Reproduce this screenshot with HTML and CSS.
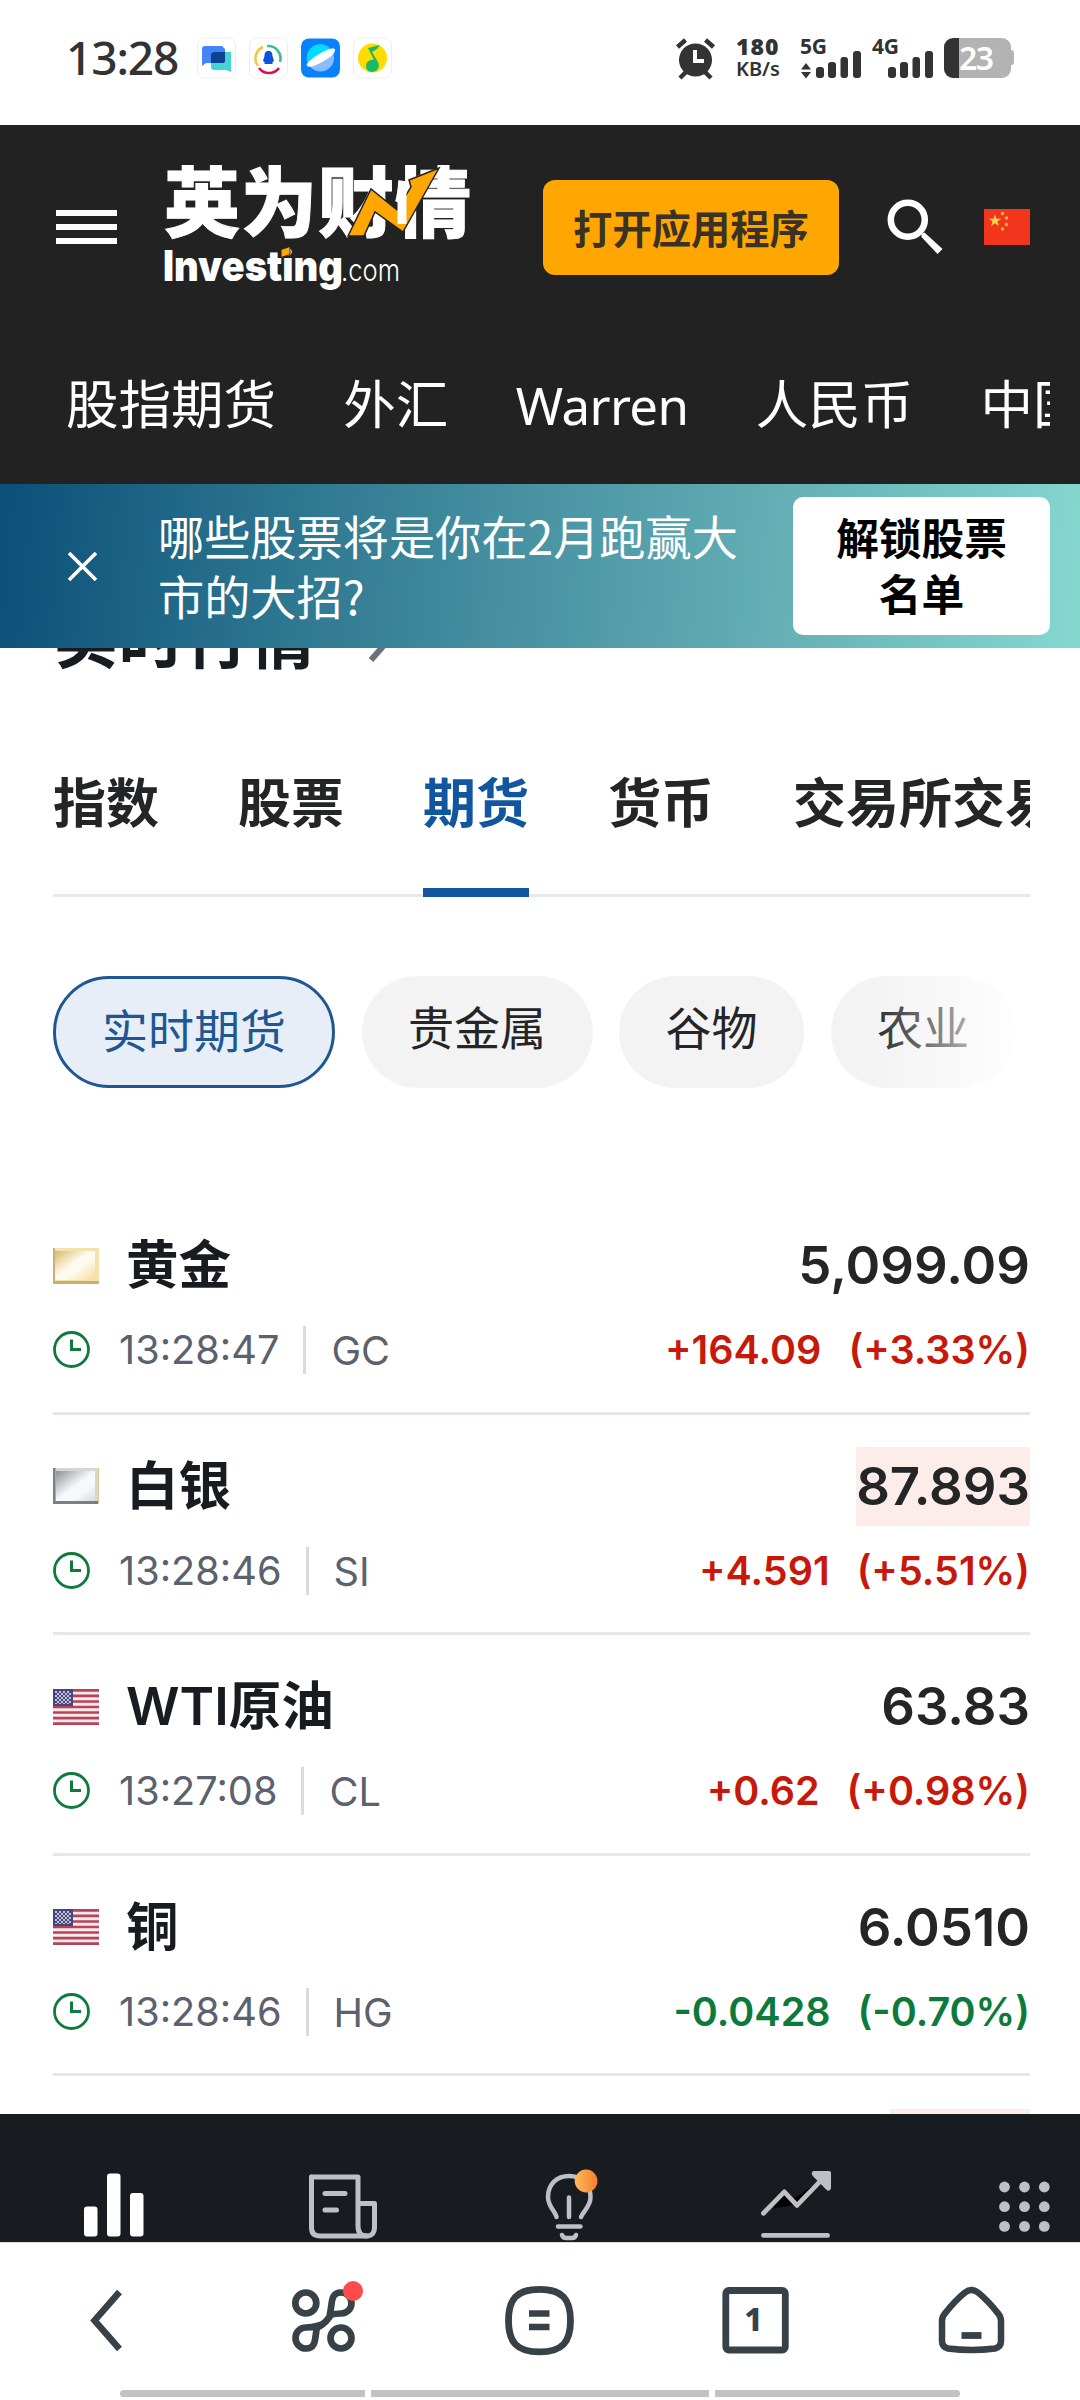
FILE: index.html
```html
<!DOCTYPE html>
<html lang="zh-CN">
<head>
<meta charset="utf-8">
<title>英为财情 Investing.com</title>
<link rel="stylesheet" href="styles.css">
</head>
<body>
<div class="phone">
  <div class="status">
    <span class="clock">13:28</span>
    <div class="apps">
      <svg class="app" viewBox="0 0 40 42"><rect x=".5" y="1" width="38" height="40" rx="7" fill="#fff" stroke="#eee"/><path d="M5 12q0-3 3-3h17l3 3v12q0 2-2 2H9l-4 3z" fill="#4285f4"/><path d="M14 18q0-3 3-3h17v20l-5-2H17q-3 0-3-3z" fill="#44d4d4"/><path d="M14 18q0-3 3-3h11v9q0 2-2 2H14z" fill="#0d4191"/></svg>
      <svg class="app" viewBox="0 0 40 42"><rect x=".5" y="1" width="38" height="40" rx="7" fill="#fff" stroke="#eee"/><g fill="none" stroke-width="2.6"><path d="M9 29a12.500 12.500 0 0 1 5-19" stroke="#f5c63c"/><path d="M18 9a12.500 12.500 0 0 1 13 16" stroke="#3bbfa0"/><path d="M30 31a12.500 12.500 0 0 1-20 0" stroke="#d90e56"/></g><path d="M19.500 14c3 0 4 2 4 5l1.500 5-1.500 1v2h-8v-2L14 24l1.500-5c0-3 1-5 4-5z" fill="#0a55d8"/></svg>
      <svg class="app" viewBox="0 0 40 42"><rect x="0" y="1.500" width="39" height="39" rx="8" fill="#0782fa"/><circle cx="19.500" cy="21" r="13.500" fill="#8abcff"/><path d="M6.500 25A13.500 13.500 0 0 1 31 14z" fill="#00dcff"/><path d="M6 29c-2-2 5-8 13-12.500S34 10 34 13s-4 7-12 11.500S8 31 6 29z" fill="#fff"/></svg>
      <svg class="app" viewBox="0 0 40 42"><rect x=".5" y="1" width="38" height="40" rx="7" fill="#fff" stroke="#eee"/><circle cx="19.500" cy="21" r="14.500" fill="#ffdc00"/><path d="M15 11l12-3-3 4-5 3 6 10c3 6-2 10-6 10s-6-3-6-6c0-4 4-7 8-6z" fill="#1bb86b"/></svg>
    </div>
    <div class="status-right">
      <svg class="alarm" viewBox="676 38 40 42"><circle cx="695.500" cy="60" r="16.500" fill="#333"/><path d="M677.500 47l8-7M713.500 47l-8-7M680 78l6-6M711 78l-6-6" stroke="#333" stroke-width="4.500"/><path d="M695 50v11h9" fill="none" stroke="#fff" stroke-width="4"/></svg>
      <div class="rate"><b>180</b><span>KB/s</span></div>
      <svg class="signal" viewBox="800 36 62 44"><text x="800" y="54" textLength="27">5G</text><path d="M801 69.500l5-6.500 5 6.500zM801 72h10l-5 6.500z"/><rect x="816" y="67" width="8" height="11" rx="3"/><rect x="828" y="62" width="8" height="16" rx="3"/><rect x="840.500" y="57" width="7.500" height="21" rx="3"/><rect x="853" y="51" width="8" height="27" rx="3"/></svg>
      <svg class="signal" viewBox="872 36 62 44"><text x="872" y="54" textLength="27">4G</text><rect x="888" y="67" width="8" height="11" rx="3"/><rect x="900" y="62" width="8" height="16" rx="3"/><rect x="912.500" y="57" width="7.500" height="21" rx="3"/><rect x="925" y="51" width="8" height="27" rx="3"/></svg>
      <div class="battery"><span>23</span></div>
    </div>
  </div>

  <header class="header">
    <div class="brand-row">
      <div class="burger"><i></i><i></i><i></i></div>
      <svg class="logo" viewBox="160 155 320 140">
        <text class="logo-cn" x="164" y="231" textLength="307">英为财情</text>
        <path d="M348 236l23-47 26 21 14-23-2-7 30-12-36 64-28-20-11 24z" fill="#ffa600" stroke="#222" stroke-width="1.500"/>
        <path d="M397.500 192l9-5v37h-9z" fill="#fff"/>
        <text class="logo-en" x="163" y="281" textLength="180" lengthAdjust="spacingAndGlyphs">Investing</text>
        <path d="M281 249.500l9-3v8l-9 3z" fill="#ffa600" stroke="#222" stroke-width="1"/>
        <text class="logo-com" x="341" y="281" textLength="59" lengthAdjust="spacingAndGlyphs">.com</text>
      </svg>
      <div class="open-app">打开应用程序</div>
      <svg class="search" viewBox="886 199 58 58"><circle cx="907.800" cy="220.800" r="17" fill="none" stroke="#fff" stroke-width="6.500"/><path d="M921.500 235l3-1.500 18 16.500-5 5-16-17z" fill="#fff"/></svg>
      <svg class="cn-flag" viewBox="0 0 46 36"><path fill="#f1361d" d="M0 0h46v36H0z"/><path fill="#ffd348" d="M11 5.500l1.500 4.300h4.600l-3.700 2.700 1.400 4.500-3.800-2.700L7.200 17l1.400-4.500-3.700-2.700h4.600z"/><g fill="#f7b53a"><circle cx="18.500" cy="4.500" r="1.700"/><circle cx="22.500" cy="9" r="1.700"/><circle cx="22.500" cy="15.500" r="1.700"/><circle cx="18.500" cy="20" r="1.700"/></g></svg>
    </div>
    <nav class="topnav"><span>股指期货</span><span>外汇</span><span class="latin">Warren</span><span>人民币</span><span>中国</span></nav>
  </header>

  <div class="banner">
    <svg class="close" viewBox="0 0 31 31"><path d="M2 2l27 27M29 2L2 29" stroke="#fff" stroke-width="3.600"/></svg>
    <p class="promo">哪些股票将是你在2月跑赢大<br>市的大招?</p>
    <div class="unlock">解锁股票<br>名单</div>
  </div>

  <main class="main">
    <div class="title-clip">
      <h2 class="title">实时行情</h2>
      <svg class="chev" viewBox="0 0 20 38"><path d="M2 2l15 17L2 36" fill="none" stroke="#6a707c" stroke-width="6"/></svg>
    </div>
    <div class="tabs"><span>指数</span><span>股票</span><span class="on">期货</span><span>货币</span><span>交易所交易基金</span></div>
    <div class="chips"><span class="chip on">实时期货</span><span class="chip">贵金属</span><span class="chip">谷物</span><span class="chip">农业</span></div>

    <svg class="defs" width="0" height="0">
      <defs>
        <linearGradient id="gold" x2="1" y2="1"><stop offset="0" stop-color="#d8b868"/><stop offset=".45" stop-color="#fffaf0"/><stop offset=".6" stop-color="#fffaf0"/><stop offset="1" stop-color="#f4dc96"/></linearGradient>
        <linearGradient id="silver" x2="1" y2="1"><stop offset="0" stop-color="#8f9197"/><stop offset=".5" stop-color="#f7f8fb"/><stop offset=".7" stop-color="#f7f8fb"/><stop offset="1" stop-color="#d9dade"/></linearGradient>
        <linearGradient id="dot"><stop offset="0" stop-color="#fdbd5b"/><stop offset="1" stop-color="#f67c2e"/></linearGradient>
        <pattern id="stars" width="4" height="4" patternUnits="userSpaceOnUse"><path fill="#46467f" d="M0 0h4v4H0z"/><circle cx="1" cy="1" r=".9" fill="#fff"/><circle cx="3" cy="3" r=".9" fill="#fff"/></pattern>
        <symbol id="us" viewBox="0 0 46 36"><path fill="#fbe9ec" d="M0 0h46v36H0z"/><path d="M0 1.400h46M0 6.900h46M0 12.500h46M0 18h46M0 23.500h46M0 29.100h46M0 34.600h46" stroke="#b5445a" stroke-width="2.600"/><path fill="#46467f" d="M0 0h20v17H0z"/><path fill="url(#stars)" d="M2 2h16v13H2z"/></symbol>
        <symbol id="clk" viewBox="0 0 38 38"><circle cx="18.500" cy="18.500" r="17" fill="none" stroke="#0f7a3c" stroke-width="2.800"/><path d="M18.500 8.500v10H28" fill="none" stroke="#0f7a3c" stroke-width="3"/></symbol>
      </defs>
    </svg>

    <div class="row">
      <div class="line1"><svg class="flag" viewBox="0 0 46 36"><path fill="#f3e2ac" d="M0 0h46v36H0z"/><path fill="#c9b06e" d="M0 0h2v33h44v3H0z"/><path fill="url(#gold)" d="M2 3h40v29H2z"/></svg><span class="name">黄金</span><span class="price">5,099.09</span></div>
      <div class="line2"><svg class="clk"><use href="#clk"/></svg><span class="time">13:28:47</span><span class="code">GC</span><span class="chg up"><b>+164.09</b><b>(+3.33%)</b></span></div>
    </div>
    <div class="row">
      <div class="line1"><svg class="flag" viewBox="0 0 46 36"><path fill="#d5d6da" d="M0 0h46v36H0z"/><path fill="#7c7e85" d="M0 0h2.500v33H45v3H0z"/><path fill="url(#silver)" d="M3 3h39v30H3z"/><path fill="#ddc67e" d="M45 0h1v36h-1z"/></svg><span class="name">白银</span><span class="price flash">87.893</span></div>
      <div class="line2"><svg class="clk"><use href="#clk"/></svg><span class="time">13:28:46</span><span class="code">SI</span><span class="chg up"><b>+4.591</b><b>(+5.51%)</b></span></div>
    </div>
    <div class="row">
      <div class="line1"><svg class="flag"><use href="#us"/></svg><span class="name">WTI原油</span><span class="price">63.83</span></div>
      <div class="line2"><svg class="clk"><use href="#clk"/></svg><span class="time">13:27:08</span><span class="code">CL</span><span class="chg up"><b>+0.62</b><b>(+0.98%)</b></span></div>
    </div>
    <div class="row">
      <div class="line1"><svg class="flag"><use href="#us"/></svg><span class="name">铜</span><span class="price">6.0510</span></div>
      <div class="line2"><svg class="clk"><use href="#clk"/></svg><span class="time">13:28:46</span><span class="code">HG</span><span class="chg down"><b>-0.0428</b><b>(-0.70%)</b></span></div>
    </div>
    <div class="next-flash"></div>
  </main>

  <div class="dock">
    <svg viewBox="78 2166 72 76"><g fill="#fff"><rect x="84" y="2206.500" width="13.500" height="30" rx="3"/><rect x="107" y="2173.500" width="13.500" height="63" rx="3"/><rect x="130" y="2193" width="13.500" height="43.500" rx="3"/></g></svg>
    <svg viewBox="305 2166 72 76"><g fill="none" stroke="#bfc0c5" stroke-width="5" stroke-linejoin="round" stroke-linecap="round"><path d="M311.500 2177h46.500v49q0 10 8.500 10t8-10v-22.500H359"/><path d="M311.500 2177v51q0 8 9 8h46"/><path d="M325 2193.500h20M325 2210h11.500"/></g></svg>
    <svg viewBox="532.500 2166 72 76"><g fill="none" stroke="#bfc0c5" stroke-width="4.500" stroke-linecap="round"><path d="M556 2217c-1-6-8.500-10-8.500-20 0-13 9-21 21-21S590 2184 590 2197c0 10-7.500 14-9.500 20M568.500 2197.500v19.500M557.500 2226.500h22.500M561.500 2235q1 3 4 3h6q3 0 4-3"/></g><circle cx="585.600" cy="2181" r="11.400" fill="url(#dot)"/></svg>
    <svg viewBox="760 2166 74 76"><path d="M773 2209l12-18 6 10 25-17-17 20z" fill="#000"/><path d="M763.500 2213.500l21.500-22 13 14 28-29M763.500 2236.300h66" fill="none" stroke="#bfc0c5" stroke-width="4.800" stroke-linecap="round" stroke-linejoin="round"/><path d="M815 2170h16q2 0 2 2v16q-2 4-5 1l-14-14q-2-4 1-5z" fill="#bfc0c5"/></svg>
    <svg viewBox="988 2166 72 76"><g fill="#bfc0c5"><circle cx="1004.500" cy="2187" r="5.400"/><circle cx="1024.500" cy="2187" r="5.400"/><circle cx="1044.300" cy="2187" r="5.400"/><circle cx="1004.500" cy="2206.700" r="5.400"/><circle cx="1024.500" cy="2206.700" r="5.400"/><circle cx="1044.300" cy="2206.700" r="5.400"/><circle cx="1004.500" cy="2226.400" r="5.400"/><circle cx="1024.500" cy="2226.400" r="5.400"/><circle cx="1044.300" cy="2226.400" r="5.400"/></g></svg>
  </div>

  <div class="browser">
    <svg viewBox="68 2280 80 80"><path d="M119.500 2292l-25 28.500 25 28.500" fill="none" stroke="#374248" stroke-width="6.500"/></svg>
    <svg viewBox="284 2280 80 80"><g fill="none" stroke="#374248" stroke-width="6.700"><circle cx="305.800" cy="2303" r="10.500"/><circle cx="341" cy="2338" r="10.500"/><path d="M315 2329c8-4 14-9 17-17"/><path d="M330 2313.500C332.500 2304 330 2292.500 341 2292.500c6 0 10.500 5 10.500 10.500s-4 10.500-10.500 10.500c-4 0-7 .2-11 1.500zM317 2327.500C314.500 2337 317 2348.500 306 2348.500c-6 0-10.500-5-10.500-10.500s4-10.500 10.500-10.500c4 0 7-.2 11-1.500z"/></g><circle cx="353" cy="2291" r="10" fill="#ff4b4b"/></svg>
    <svg viewBox="500 2280 80 80"><path d="M539.500 2289.300c23 0 31 10 31 31.300s-8 31.300-31 31.300-31-10-31-31.300 8-31.300 31-31.300z" fill="none" stroke="#374248" stroke-width="6.800"/><path d="M529 2313.500h20.500M529 2327h20.500" stroke="#374248" stroke-width="6.500"/></svg>
    <svg viewBox="716 2280 80 80"><rect x="725.800" y="2290.500" width="59.500" height="59.500" rx="3" fill="none" stroke="#374248" stroke-width="6.800"/><text class="tabnum" x="753.500" y="2331" text-anchor="middle">1</text></svg>
    <svg viewBox="932 2280 80 80"><path d="M965 2292.500q6.500-5 13 0 10 8 20.500 21.500 2.500 3 2.500 7v20q0 6-6 7.500-23.500 3-47 0-6-1.500-6-7.500v-20q0-4 2.500-7 10.500-13.500 20.500-21.500z" fill="none" stroke="#374248" stroke-width="6.500"/><path d="M961.500 2335.500h20" stroke="#374248" stroke-width="6.800"/></svg>
  </div>
  <div class="handles"><i></i><i></i><i></i></div>
</div>
</body>
</html>
```
FILE: styles.css
```css
* { box-sizing: border-box; }
body { margin: 0; background: #fff; font-family: "Noto Sans CJK SC", sans-serif; }
svg { display: block; flex: none; }
.phone { width: 1080px; height: 2400px; overflow: hidden; display: flex; flex-direction: column; background: #fff; }

.status { height: 125px; flex: none; display: flex; align-items: flex-start; padding: 37px 69px 0 66px; color: #333; font-family: "Noto Sans", sans-serif; }
.clock { width: 131px; font-size: 46px; line-height: 41px; font-weight: 550; letter-spacing: -1.100px; }
.apps { display: flex; gap: 12px; }
.app { width: 40px; height: 42px; }
.status-right { margin-left: auto; display: flex; }
.alarm { width: 40px; height: 42px; margin-right: 20px; margin-top: 1px; }
.rate { width: 64px; display: flex; flex-direction: column; font-size: 20px; line-height: 26px; font-weight: 600; letter-spacing: 0; }
.rate b { font-size: 23px; line-height: 19px; letter-spacing: 1px; }
.signal { width: 62px; height: 44px; margin: -1px 10px 0 0; fill: #333; font-size: 21px; font-weight: 700; overflow: visible; }
.battery { position: relative; width: 67px; height: 40px; margin-top: 1px; border-radius: 9px; background: linear-gradient(90deg, #333 15px, #b3b3b3 15px); color: #fff; font-size: 32px; line-height: 40px; font-weight: 600; padding-left: 15px; letter-spacing: -1.500px; }
.battery::after { content: ""; position: absolute; left: 67px; top: 12px; width: 3px; height: 15px; border-radius: 0 3px 3px 0; background: #b3b3b3; }

.header { height: 359px; flex: none; background: #222; }
.brand-row { height: 204px; display: flex; align-items: center; padding-left: 56px; }
.burger { width: 61px; height: 34px; margin-right: 43px; display: flex; flex-direction: column; justify-content: space-between; }
.burger i { height: 6px; background: #fff; }
.logo { width: 320px; height: 140px; margin-right: 63px; margin-top: -4px; fill: #fff; overflow: visible; }
.logo-cn { font-size: 76px; font-weight: 900; stroke: #fff; stroke-width: 1px; }
.logo-en { font-family: Inter, sans-serif; font-size: 42px; font-weight: 900; }
.logo-com { font-family: Inter, sans-serif; font-size: 31px; font-weight: 300; }
.open-app { width: 296px; height: 95px; border-radius: 12px; background: #ffa600; color: #3a3226; font-size: 39.300px; font-weight: 700; line-height: 93px; text-align: center; white-space: nowrap; }
.search { width: 58px; height: 58px; margin: 0 40px 0 47px; }
.cn-flag { width: 46px; height: 36px; }
.topnav { margin: 37px 30px 0 66px; display: flex; gap: 67.300px; overflow: hidden; white-space: nowrap; color: #fff; font-size: 52.500px; line-height: 76px; }
.topnav span { flex: none; }
.topnav { margin-top: 34px; }
.latin { font-family: "Noto Sans", sans-serif; font-size: 51px; letter-spacing: -.6px; padding-top: 4px; }

.banner { height: 164px; flex: none; display: flex; align-items: center; padding: 0 30px 0 67px; background: linear-gradient(95deg, #0a5078, #2b748f 25%, #64b0b5 72%, #85d8d0); color: #fff; }
.close { width: 31px; height: 31px; }
.promo { margin: -3px 0 0 60px; font-size: 46.200px; line-height: 60px; width: 635px; white-space: nowrap; }
.unlock { width: 257px; height: 138px; border-radius: 10px; background: #fff; color: #000; font-weight: 700; font-size: 42.700px; line-height: 56px; text-align: center; padding-top: 11px; }

.main { height: 1466px; flex: none; overflow: hidden; padding: 0 50px 0 53px; }
.title-clip { height: 78px; overflow: hidden; display: flex; align-items: flex-start; }
.title { margin: -63px 0 0; font-size: 65.500px; line-height: 100px; font-weight: 700; color: #181c21; }
.chev { width: 20px; height: 38px; margin: -24px 0 0 54px; }
.tabs { height: 171px; display: flex; gap: 79px; overflow: hidden; white-space: nowrap; font-size: 53px; font-weight: 700; color: #232526; background: linear-gradient(#e5e9ec, #e5e9ec) bottom / 100% 3px no-repeat; margin-bottom: 79px; }
.tabs span { flex: none; height: 171px; line-height: 148px; }
.tabs .on { color: #1256a0; border-bottom: 9px solid #1256a0; }
.chips { position: relative; display: flex; gap: 26.500px; height: 112px; margin-bottom: 106px; }
.chips::after { content: ""; position: absolute; right: 0; top: 0; width: 160px; height: 112px; background: linear-gradient(90deg, rgba(255,255,255,0), #fff); }
.chip { padding: 0 46.500px; border-radius: 56px; background: #f3f3f3; color: #232526; font-size: 46px; line-height: 98px; white-space: nowrap; }
.chip.on { padding: 0 46px; background: #e7eef7; border: 3px solid #1f5792; color: #1f5792; }
.defs { position: absolute; }

.row { height: 220.500px; border-bottom: 3px solid #e4e8ee; padding-top: 32px; }
.line1 { height: 79px; display: flex; align-items: center; }
.flag { width: 46px; height: 36px; }
.name { margin-left: 27px; font-family: Inter, "Noto Sans CJK SC", sans-serif; font-size: 52.500px; line-height: 79px; font-weight: 600; color: #181c21; }
.price { margin-left: auto; font-family: Inter, sans-serif; font-size: 52.700px; line-height: 79px; font-weight: 600; color: #232526; }
.flash { background: #fcecea; height: 79px; }
.line2 { height: 48px; margin-top: 21px; display: flex; align-items: center; font-family: Inter, sans-serif; font-size: 39.700px; line-height: 49px; color: #5b616e; }
.clk { width: 38px; height: 38px; margin-right: 28px; }
.line2 span { padding-top: 1px; }
.line2 .code { margin-left: 24px; padding: 0 0 0 25px; border-left: 3px solid #d9dcdf; height: 48px; line-height: 50px; }
.chg { margin-left: auto; display: flex; gap: 27px; font-size: 39.500px; }
.chg b { font-weight: 600; }
.up { color: #c7180a; }
.down { color: #0c7a3a; }
.next-flash { margin: 33px 0 0 auto; width: 140px; height: 79px; background: #fcecea; }

.dock { height: 128px; flex: none; width: 1138px; display: grid; grid-template-columns: repeat(5, 227.500px); justify-items: center; padding-top: 52px; background: #181b20; }
.dock svg { width: 72px; height: 76px; }
.browser { height: 148px; flex: none; border-top: 1px solid #ddd; display: grid; grid-template-columns: repeat(5, 216px); justify-items: center; padding-top: 37px; }
.browser svg { width: 80px; height: 80px; }
.tabnum { font-family: "Noto Sans", sans-serif; font-size: 32px; font-weight: 800; fill: #374248; }
.handles { display: grid; grid-template-columns: 245px 338px 245px; gap: 6px; padding-left: 120px; }
.handles i { height: 7px; background: #c2c2c2; }
.handles i:first-child { border-radius: 4px 0 0 4px; }
.handles i:last-child { border-radius: 0 4px 4px 0; }
```
